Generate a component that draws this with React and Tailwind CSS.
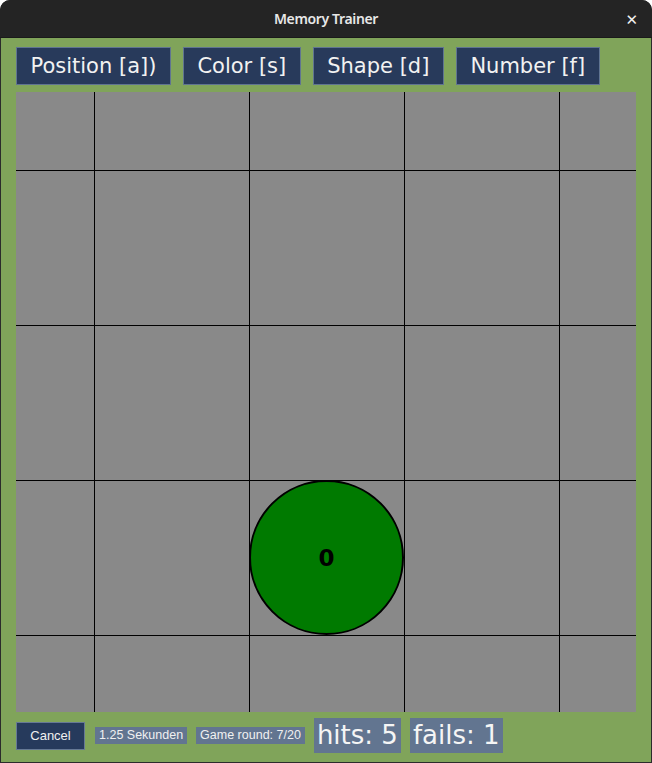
import React from 'react';

const CELL = 155;
const OFFSET = 78;
const SIZE = 620;

// answer buttons along the top
const answers = ['Position [a])', 'Color [s]', 'Shape [d]', 'Number [f]'];

function Board() {
  const lines = [0, 1, 2, 3].map((i) => OFFSET + i * CELL + 0.5);
  return (
    <svg width={SIZE} height={SIZE} className="block">
      <rect x="0" y="0" width={SIZE} height={SIZE} fill="#898989" />
      {lines.map((p) => (
        <g key={p}>
          <line x1={p} y1="0" x2={p} y2={SIZE} stroke="#000" strokeWidth="1" />
          <line x1="0" y1={p} x2={SIZE} y2={p} stroke="#000" strokeWidth="1" />
        </g>
      ))}
      <circle cx={310.5} cy={465.5} r={76.5} fill="#007a00" stroke="#000" strokeWidth="2" />
      <text
        x={310.5}
        y={474}
        textAnchor="middle"
        fontFamily="'DejaVu Sans', sans-serif"
        fontWeight="bold"
        fontSize="23"
        fill="#000"
      >
        0
      </text>
    </svg>
  );
}

export default function App() {
  return (
    <div className="w-[652px] h-[763px] bg-[#2b2b2b] rounded-t-[10px] overflow-hidden flex flex-col" style={{ fontFamily: "'DejaVu Sans', sans-serif" }}>
      <div className="h-[38px] shrink-0 bg-[#242424] flex items-center justify-center relative border-b border-[#1a1a1a]">
        <span className="text-[14px] font-semibold text-[#e8e8e8] tracking-tight" style={{ fontFamily: "'Noto Sans', sans-serif" }}>
          Memory Trainer
        </span>
        <span className="absolute right-[14px] top-[9px] text-[#f0f0f0] text-[15px] font-bold">✕</span>
      </div>

      <div className="flex-1 mx-px mb-px bg-[#80a45a] flex flex-col pl-[15px]">
        <div className="flex gap-3 pt-[9px] h-[54px] shrink-0">
          {answers.map((a) => (
            <button
              key={a}
              className="h-[38px] px-[13.5px] bg-[#283a5b] border border-[#607491] text-[#f2f2f2] text-[21px] leading-none"
            >
              {a}
            </button>
          ))}
        </div>

        <Board />

        <div className="flex items-center mt-[6px] gap-[9px]" style={{ fontFamily: "'Liberation Sans', sans-serif" }}>
          <button className="w-[69px] h-[28px] bg-[#263a5c] border border-[#667995] text-[#f0f0f0] text-[13px]">Cancel</button>
          <span className="h-[17px] px-[4px] bg-[#627590] text-[#f0f0f0] text-[12.5px] leading-[17px] ml-px">1.25 Sekunden</span>
          <span className="h-[17px] px-[4px] bg-[#627590] text-[#f0f0f0] text-[12.5px] leading-[17px]">Game round: 7/20</span>
          <span className="h-[35px] px-[3px] bg-[#627590] text-[#f5f5f5] text-[26px] leading-[35px]" style={{ fontFamily: "'DejaVu Sans', sans-serif" }}>hits: 5</span>
          <span className="h-[35px] px-[3px] bg-[#627590] text-[#f5f5f5] text-[26px] leading-[35px]" style={{ fontFamily: "'DejaVu Sans', sans-serif" }}>fails: 1</span>
        </div>
      </div>
    </div>
  );
}
